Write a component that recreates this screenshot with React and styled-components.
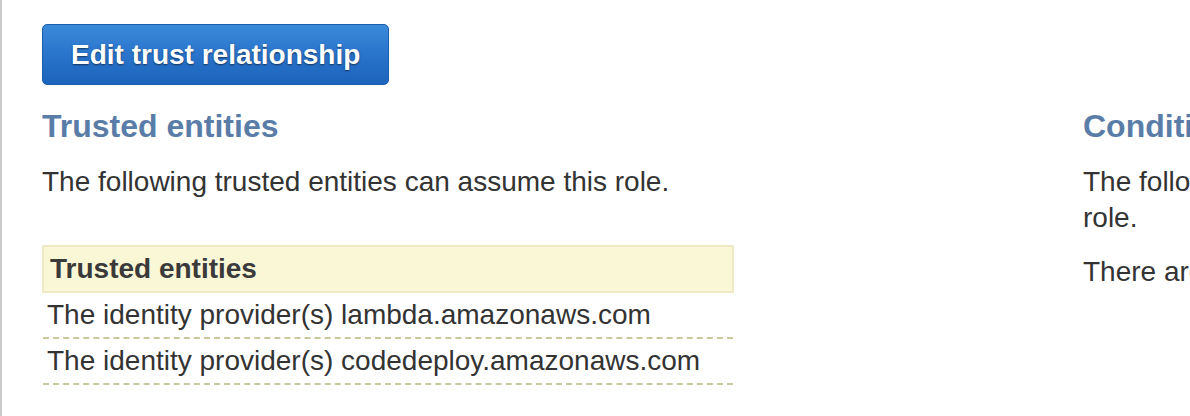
import React from "react";
import styled, { createGlobalStyle } from "styled-components";

const GlobalStyle = createGlobalStyle`
  html, body {
    margin: 0;
    padding: 0;
    background: #fff;
    overflow: hidden;
  }
  body {
    font-family: "Liberation Sans", Arial, sans-serif;
    color: #333;
  }
`;

const ENTITIES = [
  "The identity provider(s) lambda.amazonaws.com",
  "The identity provider(s) codedeploy.amazonaws.com",
];

const App = () => {
  return (
    <>
      <GlobalStyle />
      <Page>
        <EditButton type="button">Edit trust relationship</EditButton>
        <Columns>
          <Column>
            <Heading>Trusted entities</Heading>
            <Text>The following trusted entities can assume this role.</Text>
            <EntityTable>
              <thead>
                <tr>
                  <HeadCell>Trusted entities</HeadCell>
                </tr>
              </thead>
              <tbody>
                {ENTITIES.map((val) => (
                  <tr key={val}>
                    <Cell>{val}</Cell>
                  </tr>
                ))}
              </tbody>
            </EntityTable>
          </Column>
          <Column>
            <Heading>Conditions</Heading>
            <Text>
              The following conditions define when trusted entities can assume this role.
            </Text>
            <Text>There are no conditions associated with this role.</Text>
          </Column>
        </Columns>
      </Page>
    </>
  );
};

const Page = styled.div`
  width: 2000px;
  height: 416px;
  box-sizing: border-box;
  border-left: 2px solid #cccccc;
  padding: 24px 0 0 40px;
`;

const EditButton = styled.button`
  display: block;
  height: 61px;
  padding: 0 28px;
  border: 1px solid #1b5cad;
  border-radius: 5px;
  background: linear-gradient(180deg, #3b8ada 0%, #2a74cc 50%, #1c63bb 100%);
  color: #fff;
  font-family: "Liberation Sans", Arial, sans-serif;
  font-size: 28px;
  font-weight: bold;
  text-shadow: 0 1px 2px rgba(0, 0, 0, 0.55);
  cursor: pointer;
`;

const Columns = styled.div`
  display: grid;
  grid-template-columns: 1000px 880px;
  column-gap: 41px;
  margin-top: 23px;
`;

const Column = styled.div`
  display: flex;
  flex-direction: column;
`;

const Heading = styled.h2`
  margin: 0 0 20px;
  font-size: 32px;
  line-height: 36px;
  font-weight: bold;
  color: #5a7da8;
`;

const Text = styled.p`
  margin: 0 0 18px;
  font-size: 28px;
  line-height: 36px;
  color: #333;
`;

const EntityTable = styled.table`
  width: 692px;
  margin-top: 27px;
  border-collapse: collapse;
  font-size: 28px;
  color: #333;
`;

const HeadCell = styled.th`
  height: 44px;
  padding: 0 6px;
  text-align: left;
  font-weight: bold;
  background: #faf7d6;
  border: 2px solid #eeeac6;
  color: #3a3a3a;
`;

const Cell = styled.td`
  padding: 4px 4px 4px;
  line-height: 36px;
  border-bottom: 2px dashed #c9c89c;
`;

export default App;
